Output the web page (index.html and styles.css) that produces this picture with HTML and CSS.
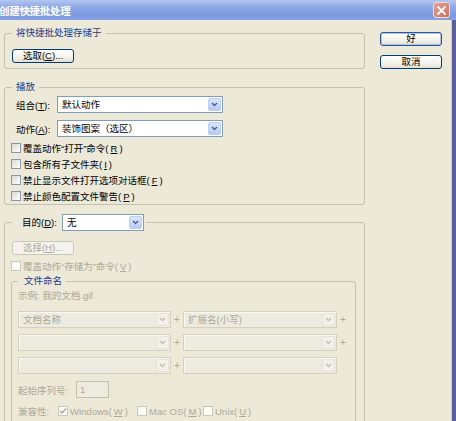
FILE: index.html
```html
<!DOCTYPE html>
<html lang="zh-CN">
<head>
<meta charset="utf-8">
<title>创建快捷批处理</title>
<link rel="stylesheet" href="styles.css">
</head>
<body>
<div class="window">
  <div class="titlebar">
    <span class="title">创建快捷批处理</span>
    <span class="close"><svg width="9" height="9" viewBox="0 0 9 9"><path d="M1 1L8 8M8 1L1 8" stroke="#fff" stroke-width="1.8" stroke-linecap="round"/></svg></span>
  </div>
  <div class="frame">
    <div class="client">
      <div class="leftcol">
        <div class="group g1">
          <div class="legend">将快捷批处理存储于</div>
          <div class="btn pick">选取(<u>C</u>)...</div>
        </div>

        <div class="group g2">
          <div class="legend">播放</div>
          <div class="field">
            <span class="flabel">组合(<u>T</u>):</span>
            <div class="combo w166"><span>默认动作</span><span class="arrow"><svg width="7" height="5" viewBox="0 0 7 5"><path d="M1 1L3.5 3.5L6 1" fill="none" stroke="#4d6185" stroke-width="1.5"/></svg></span></div>
          </div>
          <div class="field">
            <span class="flabel">动作(<u>A</u>):</span>
            <div class="combo w166"><span>装饰图案（选区）</span><span class="arrow"><svg width="7" height="5" viewBox="0 0 7 5"><path d="M1 1L3.5 3.5L6 1" fill="none" stroke="#4d6185" stroke-width="1.5"/></svg></span></div>
          </div>
          <div class="checks">
            <div class="check"><span class="box"></span>覆盖动作“打开”命令(<u>R</u>)</div>
            <div class="check"><span class="box"></span>包含所有子文件夹(<u>I</u>)</div>
            <div class="check"><span class="box"></span>禁止显示文件打开选项对话框(<u>F</u>)</div>
            <div class="check"><span class="box"></span>禁止颜色配置文件警告(<u>P</u>)</div>
          </div>
        </div>

        <div class="group g3">
          <div class="legend dlegend"><span class="dlabel">目的(<u>D</u>):</span><span class="combo w81"><span>无</span><span class="arrow"><svg width="7" height="5" viewBox="0 0 7 5"><path d="M1 1L3.5 3.5L6 1" fill="none" stroke="#4d6185" stroke-width="1.5"/></svg></span></span></div>
          <div class="btn disabled sel">选择(<u>H</u>)...</div>
          <div class="check dis save"><span class="box"></span>覆盖动作“存储为”命令(<u>V</u>)</div>

          <div class="group inner">
            <div class="legend">文件命名</div>
            <div class="example">示例: 我的文档.gif</div>
            <div class="namegrid">
              <div class="combo dcombo"><span>文档名称</span><span class="arrow"><svg width="7" height="5" viewBox="0 0 7 5"><path d="M1 1L3.5 3.5L6 1" fill="none" stroke="#c5c2b3" stroke-width="1.5"/></svg></span></div>
              <span class="plus">+</span>
              <div class="combo dcombo"><span>扩展名(小写)</span><span class="arrow"><svg width="7" height="5" viewBox="0 0 7 5"><path d="M1 1L3.5 3.5L6 1" fill="none" stroke="#c5c2b3" stroke-width="1.5"/></svg></span></div>
              <span class="plus">+</span>

              <div class="combo dcombo"><span></span><span class="arrow"><svg width="7" height="5" viewBox="0 0 7 5"><path d="M1 1L3.5 3.5L6 1" fill="none" stroke="#c5c2b3" stroke-width="1.5"/></svg></span></div>
              <span class="plus">+</span>
              <div class="combo dcombo"><span></span><span class="arrow"><svg width="7" height="5" viewBox="0 0 7 5"><path d="M1 1L3.5 3.5L6 1" fill="none" stroke="#c5c2b3" stroke-width="1.5"/></svg></span></div>
              <span class="plus">+</span>

              <div class="combo dcombo"><span></span><span class="arrow"><svg width="7" height="5" viewBox="0 0 7 5"><path d="M1 1L3.5 3.5L6 1" fill="none" stroke="#c5c2b3" stroke-width="1.5"/></svg></span></div>
              <span class="plus">+</span>
              <div class="combo dcombo"><span></span><span class="arrow"><svg width="7" height="5" viewBox="0 0 7 5"><path d="M1 1L3.5 3.5L6 1" fill="none" stroke="#c5c2b3" stroke-width="1.5"/></svg></span></div>
              <span class="plus"></span>
            </div>
            <div class="seqrow">
              <span class="seqlabel">起始序列号:</span>
              <span class="seqinput">1</span>
            </div>
            <div class="compat">
              <span class="clabel">兼容性:</span>
              <span class="citem cw"><span class="box"><svg width="8" height="8" viewBox="0 0 8 8"><path d="M1 4L3 6L7 1.5" fill="none" stroke="#aca899" stroke-width="1.4"/></svg></span>Windows(<u>W</u>)</span>
              <span class="citem cm"><span class="box"></span>Mac OS(<u>M</u>)</span>
              <span class="citem"><span class="box"></span>Unix(<u>U</u>)</span>
            </div>
          </div>
        </div>
      </div>
      <div class="rightcol">
        <div class="btn default">好</div>
        <div class="btn">取消</div>
      </div>
    </div>
    <div class="rborder"></div>
  </div>
</div>
</body>
</html>
```

FILE: styles.css
```css
* { box-sizing: border-box; }
html, body { margin: 0; padding: 0; }
body {
  width: 456px;
  height: 421px;
  overflow: hidden;
  background: #ece9d8;
  font-family: "Liberation Sans", "Noto Sans CJK SC", sans-serif;
  font-size: 9.5px;
  color: #000;
}
u { text-decoration: underline; text-underline-offset: 1px; }

.window { display: flex; flex-direction: column; height: 421px; }

.titlebar {
  height: 20px;
  flex: none;
  display: flex;
  align-items: center;
  justify-content: space-between;
  padding-right: 6px;
  background: linear-gradient(#b2c6f0, #8ea9e6 35%, #7b97df 80%, #8aa4e2);
}
.title {
  color: #fff;
  font-weight: bold;
  font-size: 10.5px;
  margin-left: -1px;
  letter-spacing: -0.3px;
}
.close {
  width: 17px;
  height: 16px;
  border: 1px solid #f3dcd8;
  border-radius: 3px;
  background: linear-gradient(135deg, #e3a196, #cc6e60);
  display: flex;
  align-items: center;
  justify-content: center;
}

.frame { flex: 1; display: flex; min-height: 0; }
.client { flex: 1; display: flex; gap: 15px; padding-left: 4px; min-height: 0; overflow: hidden; }
.rborder { width: 5px; flex: none; border-left: 1px solid #cacbe8; background: #5b5f9b; }

.leftcol { width: 361px; flex: none; padding-top: 13px; display: flex; flex-direction: column; }
.rightcol { width: 62px; flex: none; padding-top: 12px; display: flex; flex-direction: column; gap: 9px; }

/* group boxes */
.group {
  border: 1px solid #c3c0ae;
  border-radius: 3px;
  padding: 0 7px;
  display: flex;
  flex-direction: column;
  align-items: flex-start;
  flex: none;
}
.legend {
  margin-top: -7px;
  height: 12px;
  line-height: 12px;
  padding: 0 4px;
  background: #ece9d8;
  color: #1d3c8c;
  white-space: nowrap;
}

.g1 { height: 36px; }
.pick { margin-top: 10px; }

.g2 { margin-top: 18px; height: 118px; }

.g3 { margin-top: 17px; height: 230px; }
.dlegend {
  margin-top: -9px;
  height: 17px;
  line-height: 17px;
  padding: 0 2px 0 10px;
  color: #000;
  display: flex;
  align-items: center;
}
.sel { margin-top: 10px; }

.btn {
  width: 62px;
  height: 14px;
  border: 1px solid #003c74;
  border-radius: 3px;
  background: linear-gradient(#ffffff, #f3f1ea 60%, #e3e0d2);
  display: flex;
  align-items: center;
  justify-content: center;
  line-height: 12px;
  flex: none;
}
.btn.default { box-shadow: inset 0 0 0 1px #a9c1f3; border-color: #2c5592; }
.btn.disabled { border-color: #c9c7ba; color: #aca899; background: #f4f3ee; }

.field { display: flex; align-items: center; height: 17px; padding-left: 4px; margin-top: 3px; }
.field + .field { margin-top: 7px; }
.flabel { width: 41px; flex: none; }

.combo {
  height: 17px;
  border: 1px solid #7f9db9;
  background: #fff;
  display: flex;
  align-items: center;
  justify-content: space-between;
  padding-left: 4px;
  line-height: 15px;
  white-space: nowrap;
  color: #000;
}
.combo .arrow {
  width: 13px;
  height: 13px;
  margin-right: 1px;
  flex: none;
  border: 1px solid #b9cdf6;
  border-radius: 2px;
  background: linear-gradient(#dbe6fd, #b8cbf8);
  display: flex;
  align-items: center;
  justify-content: center;
}
.w166 { width: 166px; }
.w81 { width: 82px; }
.dlabel { width: 40px; flex: none; }

.checks { margin-top: 3px; margin-left: -1px; }
.check { height: 16px; display: flex; align-items: center; gap: 2px; white-space: nowrap; }
.box {
  width: 10px;
  height: 10px;
  flex: none;
  border: 1px solid #8797b4;
  background: linear-gradient(135deg, #d9d8cf, #ffffff);
  display: flex;
  align-items: center;
  justify-content: center;
}
.check.dis { color: #aca899; }
.check.dis .box, .compat .box { border-color: #cbc8b9; background: #fbfbf8; }
.save { margin-top: 3px; margin-left: -1px; }

.inner {
  margin: 7px 0 0 -1px;
  width: 345px;
  height: 160px;
  padding: 0 6px;
}
.inner .legend { padding: 0 4px 0 6px; }

.example { margin-top: 2px; height: 14px; line-height: 14px; color: #aca899; }

.namegrid {
  margin-top: 8px;
  display: grid;
  grid-template-columns: 153px 12px 154px 12px;
  grid-auto-rows: 17px;
  row-gap: 6px;
}
.dcombo {
  border-color: #d4d1c2;
  background: #edebdf;
  box-shadow: inset 1px 1px 0 #f8f7f2;
  color: #aca899;
}
.dcombo .arrow { border-color: #e6e4da; background: #f2f0e8; }
.plus { color: #aca899; display: flex; align-items: center; justify-content: center; font-size: 10px; }

.seqrow { margin-top: 7px; height: 17px; display: flex; align-items: center; color: #aca899; }
.seqlabel { width: 58px; flex: none; }
.seqinput {
  width: 33px;
  height: 17px;
  border: 1px solid #c3c0b0;
  padding-left: 3px;
  line-height: 15px;
  background: #edebdf;
}

.compat { margin-top: 5px; height: 16px; display: flex; align-items: center; color: #aca899; white-space: nowrap; }
.clabel { width: 40px; flex: none; }
.citem { display: flex; align-items: center; gap: 2px; }
.cw { width: 79px; }
.cm { width: 66px; }
```
